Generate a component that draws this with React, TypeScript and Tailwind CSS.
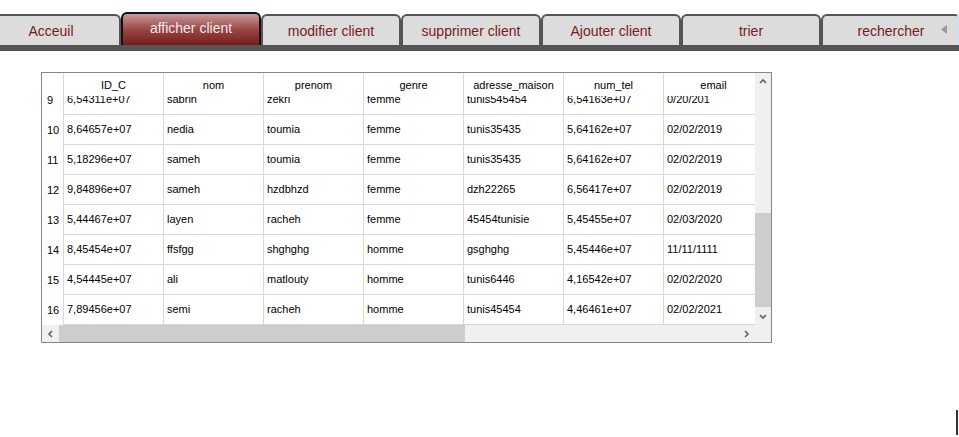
import React from 'react';

const tabs = ['Acceuil', 'afficher client', 'modifier client', 'supprimer client', 'Ajouter client', 'trier', 'rechercher'];
const activeTab = 1;

const columns = ['ID_C', 'nom', 'prenom', 'genre', 'adresse_maison', 'num_tel', 'email'];

const rows: [number, string[]][] = [
  [9, ['6,54311e+07', 'sabrin', 'zekri', 'femme', 'tunis545454', '6,54163e+07', '0/20/201']],
  [10, ['8,64657e+07', 'nedia', 'toumia', 'femme', 'tunis35435', '5,64162e+07', '02/02/2019']],
  [11, ['5,18296e+07', 'sameh', 'toumia', 'femme', 'tunis35435', '5,64162e+07', '02/02/2019']],
  [12, ['9,84896e+07', 'sameh', 'hzdbhzd', 'femme', 'dzh22265', '6,56417e+07', '02/02/2019']],
  [13, ['5,44467e+07', 'layen', 'racheh', 'femme', '45454tunisie', '5,45455e+07', '02/03/2020']],
  [14, ['8,45454e+07', 'ffsfgg', 'shghghg', 'homme', 'gsghghg', '5,45446e+07', '11/11/1111']],
  [15, ['4,54445e+07', 'ali', 'matlouty', 'homme', 'tunis6446', '4,16542e+07', '02/02/2020']],
  [16, ['7,89456e+07', 'semi', 'racheh', 'homme', 'tunis45454', '4,46461e+07', '02/02/2021']],
];

const Chevron = ({ dir }: { dir: 'up' | 'down' | 'left' | 'right' }) => {
  const pts = {
    up: '1,5 4,2 7,5',
    down: '1,2 4,5 7,2',
    left: '5,1 2,4 5,7',
    right: '2,1 5,4 2,7',
  }[dir];
  const horiz = dir === 'left' || dir === 'right';
  return (
    <svg width={horiz ? 7 : 8} height={horiz ? 8 : 7} viewBox={horiz ? '0 0 7 8' : '0 0 8 7'}>
      <polyline points={pts} fill="none" stroke="#606060" strokeWidth="1.6" />
    </svg>
  );
};

const TabBar = () => (
  <div className="relative pt-[12px]">
    <div className="flex items-end h-[33px] -ml-[19px]">
      {tabs.map((t, i) =>
        i === activeTab ? (
          <div
            key={t}
            className="shrink-0 w-[140px] h-[33px] border-2 border-b-0 border-[#111] rounded-t-[6px] bg-linear-to-b from-[#c79a9a] via-[#9a4646] to-[#761c1c] text-[#ececec] text-[14px] flex items-center justify-center pb-[3px]"
          >
            {t}
          </div>
        ) : (
          <div
            key={t}
            className="shrink-0 w-[140px] h-[31px] border-2 border-b-0 border-[#555] rounded-t-[6px] bg-[#dcdcdc] text-[#7a1a1a] text-[14px] flex items-center justify-center pt-[2px]"
          >
            {t}
          </div>
        )
      )}
    </div>
    <div className="h-[6px] bg-[#555]" />
    <svg className="absolute left-[941px] top-[25px]" width="7" height="9" viewBox="0 0 7 9">
      <polygon points="6,0 0,4.5 6,9" fill="#9a9a9a" />
    </svg>
    <div className="absolute left-[957px] top-[14px] w-[2px] h-[31px] bg-[#cfe0f2]" />
  </div>
);

const Table = () => (
  <div className="ml-[41px] mt-[21px] w-[731px] h-[271px] border border-[#828790] flex flex-col text-[11px] text-black">
    <div className="flex h-[252px]">
      <div className="w-[713px] overflow-hidden flex flex-col">
        <div className="flex h-[23px] shrink-0 bg-white">
          <div className="w-[22px] shrink-0 border-r border-[#d8d8d8]" />
          {columns.map((c) => (
            <div key={c} className="w-[100px] shrink-0 border-r border-[#d8d8d8] text-center pt-[6px] leading-[13px]">
              {c}
            </div>
          ))}
        </div>
        <div className="h-[229px] overflow-hidden">
          <div className="-mt-[11px]">
            {rows.map(([n, cells]) => (
              <div key={n} className="flex h-[30px]">
                <div className="w-[22px] shrink-0 border-r border-[#d8d8d8] pl-[5px] flex items-center">{n}</div>
                {cells.map((v, j) => (
                  <div key={j} className="w-[100px] shrink-0 border-r border-b border-[#d8d8d8] pl-[3px] flex items-center whitespace-nowrap overflow-hidden">
                    {v}
                  </div>
                ))}
              </div>
            ))}
          </div>
        </div>
      </div>
      <div className="w-[16px] bg-[#f0f0f0] flex flex-col">
        <div className="h-[17px] flex items-center justify-center">
          <Chevron dir="up" />
        </div>
        <div className="flex-1">
          <div className="mt-[123px] h-[94px] bg-[#cdcdcd]" />
        </div>
        <div className="h-[17px] flex items-center justify-center">
          <Chevron dir="down" />
        </div>
      </div>
    </div>
    <div className="flex h-[17px] bg-[#f0f0f0]">
      <div className="w-[17px] flex items-center justify-center">
        <Chevron dir="left" />
      </div>
      <div className="w-[679px] flex items-stretch">
        <div className="w-[406px] bg-[#cdcdcd]" />
      </div>
      <div className="w-[17px] flex items-center justify-center">
        <Chevron dir="right" />
      </div>
      <div className="w-[16px] bg-[#f0f0f0]" />
    </div>
  </div>
);

export default function App() {
  return (
    <div className="relative w-[959px] h-[437px] bg-white overflow-hidden font-['Liberation_Sans',Arial,sans-serif]">
      <TabBar />
      <Table />
      <div className="absolute right-[1px] bottom-[2px] w-[2px] h-[25px] bg-[#333]" />
    </div>
  );
}
